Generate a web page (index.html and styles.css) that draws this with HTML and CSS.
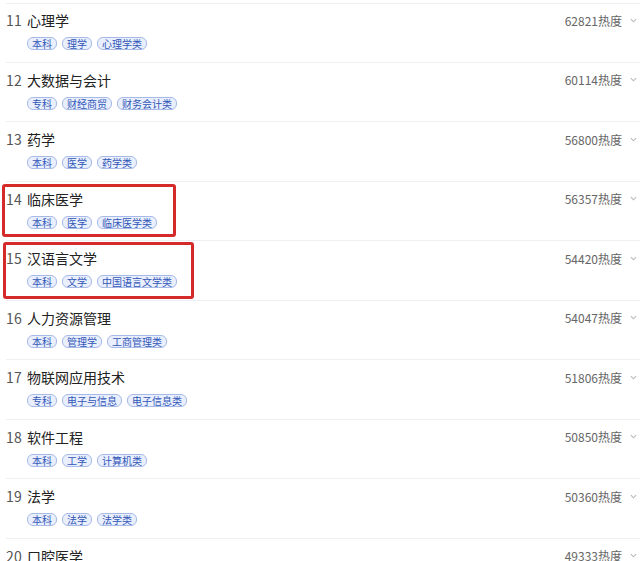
FILE: index.html
```html
<!DOCTYPE html>
<html lang="zh">
<head>
<meta charset="utf-8">
<link rel="stylesheet" href="styles.css">
</head>
<body>
<div class="list">
  <div class="row">
    <div class="main">
      <div class="title"><span class="num">11</span><span class="name">心理学</span></div>
      <div class="tags"><span class="tag">本科</span><span class="tag">理学</span><span class="tag">心理学类</span></div>
    </div>
    <div class="heat">62821热度<svg class="chev" viewBox="0 0 8 5"><path d="M1 1 L4 4 L7 1"/></svg></div>
  </div>
  <div class="row">
    <div class="main">
      <div class="title"><span class="num">12</span><span class="name">大数据与会计</span></div>
      <div class="tags"><span class="tag">专科</span><span class="tag">财经商贸</span><span class="tag">财务会计类</span></div>
    </div>
    <div class="heat">60114热度<svg class="chev" viewBox="0 0 8 5"><path d="M1 1 L4 4 L7 1"/></svg></div>
  </div>
  <div class="row">
    <div class="main">
      <div class="title"><span class="num">13</span><span class="name">药学</span></div>
      <div class="tags"><span class="tag">本科</span><span class="tag">医学</span><span class="tag">药学类</span></div>
    </div>
    <div class="heat">56800热度<svg class="chev" viewBox="0 0 8 5"><path d="M1 1 L4 4 L7 1"/></svg></div>
  </div>
  <div class="row">
    <div class="main">
      <div class="title"><span class="num">14</span><span class="name">临床医学</span></div>
      <div class="tags"><span class="tag">本科</span><span class="tag">医学</span><span class="tag">临床医学类</span></div>
    </div>
    <div class="heat">56357热度<svg class="chev" viewBox="0 0 8 5"><path d="M1 1 L4 4 L7 1"/></svg></div>
  </div>
  <div class="row">
    <div class="main">
      <div class="title"><span class="num">15</span><span class="name">汉语言文学</span></div>
      <div class="tags"><span class="tag">本科</span><span class="tag">文学</span><span class="tag">中国语言文学类</span></div>
    </div>
    <div class="heat">54420热度<svg class="chev" viewBox="0 0 8 5"><path d="M1 1 L4 4 L7 1"/></svg></div>
  </div>
  <div class="row">
    <div class="main">
      <div class="title"><span class="num">16</span><span class="name">人力资源管理</span></div>
      <div class="tags"><span class="tag">本科</span><span class="tag">管理学</span><span class="tag">工商管理类</span></div>
    </div>
    <div class="heat">54047热度<svg class="chev" viewBox="0 0 8 5"><path d="M1 1 L4 4 L7 1"/></svg></div>
  </div>
  <div class="row">
    <div class="main">
      <div class="title"><span class="num">17</span><span class="name">物联网应用技术</span></div>
      <div class="tags"><span class="tag">专科</span><span class="tag">电子与信息</span><span class="tag">电子信息类</span></div>
    </div>
    <div class="heat">51806热度<svg class="chev" viewBox="0 0 8 5"><path d="M1 1 L4 4 L7 1"/></svg></div>
  </div>
  <div class="row">
    <div class="main">
      <div class="title"><span class="num">18</span><span class="name">软件工程</span></div>
      <div class="tags"><span class="tag">本科</span><span class="tag">工学</span><span class="tag">计算机类</span></div>
    </div>
    <div class="heat">50850热度<svg class="chev" viewBox="0 0 8 5"><path d="M1 1 L4 4 L7 1"/></svg></div>
  </div>
  <div class="row">
    <div class="main">
      <div class="title"><span class="num">19</span><span class="name">法学</span></div>
      <div class="tags"><span class="tag">本科</span><span class="tag">法学</span><span class="tag">法学类</span></div>
    </div>
    <div class="heat">50360热度<svg class="chev" viewBox="0 0 8 5"><path d="M1 1 L4 4 L7 1"/></svg></div>
  </div>
  <div class="row">
    <div class="main">
      <div class="title"><span class="num">20</span><span class="name">口腔医学</span></div>
      <div class="tags"><span class="tag">本科</span><span class="tag">医学</span><span class="tag">口腔医学类</span></div>
    </div>
    <div class="heat">49333热度<svg class="chev" viewBox="0 0 8 5"><path d="M1 1 L4 4 L7 1"/></svg></div>
  </div>
  <div class="mark mark1"></div>
  <div class="mark mark2"></div>
</div>
</body>
</html>
```
FILE: styles.css
```css
html, body {
  margin: 0;
  padding: 0;
  background: #fff;
  overflow: hidden;
}
body {
  font-family: "Noto Sans CJK SC", "Noto Sans", sans-serif;
  color: #333;
}
.list {
  position: relative;
  padding-top: 2px;
  border-top: 1px solid transparent;
}
.list::before {
  content: "";
  position: absolute;
  left: 6px;
  right: 0;
  top: 2px;
  height: 1px;
  background: #eeeff2;
}
.row {
  display: flex;
  justify-content: space-between;
  align-items: flex-start;
  height: 59.56px;
  box-sizing: border-box;
  padding-top: 6px;
  margin-left: 6px;
  border-bottom: 1px solid #eeeff2;
}
.main {
  display: flex;
  flex-direction: column;
}
.title {
  display: flex;
  align-items: center;
  height: 22px;
  font-size: 14px;
}
.num {
  color: #555;
  width: 21px;
  letter-spacing: 0.3px;
}
.name {
  color: #222;
}
.tags {
  display: flex;
  gap: 5px;
  margin-top: 6px;
  margin-left: 21px;
}
.tag {
  display: inline-flex;
  align-items: center;
  height: 11px;
  padding: 0 4px;
  font-size: 10px;
  line-height: 11px;
  color: #3156b8;
  background: #e9effd;
  border: 1px solid #a7b9e6;
  border-radius: 6px;
}
.heat {
  display: flex;
  align-items: center;
  height: 22px;
  font-size: 12px;
  color: #666;
  padding-right: 3px;
}
.chev {
  width: 7px;
  height: 5px;
  margin-left: 8px;
  fill: none;
  stroke: #b8b8b8;
  stroke-width: 1.2;
}
.mark {
  position: absolute;
  border: 3px solid #d42a2a;
  border-radius: 3px;
}
.mark1 {
  left: 2px;
  top: 183px;
  width: 168px;
  height: 47px;
}
.mark2 {
  left: 3px;
  top: 241px;
  width: 185px;
  height: 51px;
}
```
